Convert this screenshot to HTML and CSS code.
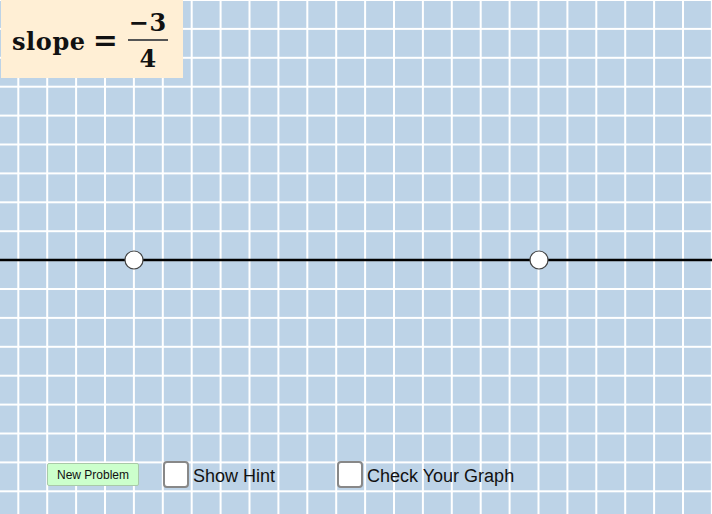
FILE: index.html
```html
<!DOCTYPE html>
<html lang="en">
<head>
    <meta charset="UTF-8">
    <meta name="viewport" content="width=device-width, initial-scale=1.0">
    <title>Graph a Line from its Slope</title>
    <link rel="stylesheet" href="styles.css">
</head>
<body>
    <div class="applet">
        <svg class="board" width="712" height="514" viewBox="0 0 712 514">
            <defs>
                <pattern id="grid" x="17.3" y="-1" width="28.9" height="28.9" patternUnits="userSpaceOnUse">
                    <rect x="0" y="0" width="2" height="28.9" fill="#fff"/>
                    <rect x="0" y="0" width="28.9" height="2" fill="#fff"/>
                </pattern>
            </defs>
            <rect width="712" height="514" fill="#bdd3e7"/>
            <rect width="712" height="514" fill="url(#grid)"/>
            <line x1="0" y1="260" x2="712" y2="260" stroke="#000" stroke-width="2.5"/>
            <circle cx="134" cy="260" r="9" fill="#fff" stroke="#444" stroke-width="1.2"/>
            <circle cx="539" cy="260" r="9" fill="#fff" stroke="#444" stroke-width="1.2"/>
        </svg>

        <div class="slope-box">
            <div class="math">
                <span class="word">slope</span>
                <span class="eq">=</span>
                <span class="frac">
                    <span class="num">&minus;3</span>
                    <span class="bar"></span>
                    <span class="den">4</span>
                </span>
            </div>
        </div>

        <div class="controls">
            <button class="btn-new" type="button">New Problem</button>
            <label class="check">
                <span class="box"></span>
                <span class="label-text">Show Hint</span>
            </label>
            <label class="check check-graph">
                <span class="box"></span>
                <span class="label-text">Check Your Graph</span>
            </label>
        </div>
    </div>
</body>
</html>
```

FILE: styles.css
```css
body {
    margin: 0;
    padding: 0;
    font-family: "Liberation Sans", Arial, sans-serif;
    background-color: #fff;
}
.applet {
    position: relative;
    width: 712px;
    height: 514px;
    overflow: hidden;
}
.board {
    position: absolute;
    left: 0;
    top: 0;
    display: block;
}
.slope-box {
    position: absolute;
    left: 1px;
    top: 0;
    width: 182px;
    height: 78px;
    background-color: #ffefd5;
    box-sizing: border-box;
    padding: 9px 0 0 11px;
}
.math {
    display: flex;
    align-items: flex-start;
    font-family: "DejaVu Serif", "Liberation Serif", serif;
    font-weight: bold;
    font-size: 24px;
    color: #111;
}
.word {
    letter-spacing: 0.6px;
    line-height: 30px;
    margin-top: 18px;
}
.eq {
    font-size: 30px;
    line-height: 30px;
    margin: 16px 10px 0 7px;
}
.frac {
    display: flex;
    flex-direction: column;
    align-items: center;
    width: 40px;
}
.num {
    line-height: 28px;
    letter-spacing: 1px;
}
.bar {
    display: block;
    width: 40px;
    height: 2px;
    margin-top: 2px;
    background-color: #555;
}
.den {
    line-height: 30px;
    margin-top: 3px;
}
.controls {
    position: absolute;
    left: 47px;
    top: 461px;
    display: flex;
    align-items: center;
    height: 27px;
}
.btn-new {
    height: 23px;
    width: 92px;
    padding: 0;
    font-family: "Liberation Sans", Arial, sans-serif;
    font-size: 12px;
    color: #111;
    background-color: #ccffcc;
    border: 1px solid #a9c9a9;
    border-radius: 2px;
    margin-right: 24px;
}
.check {
    display: flex;
    align-items: center;
    gap: 4px;
    font-size: 18px;
    color: #111;
}
.check-graph {
    margin-left: 62px;
}
.box {
    width: 22px;
    height: 23px;
    background-color: #fff;
    border: 2px solid #888;
    border-radius: 4px;
}
.label-text {
    position: relative;
    top: 2px;
}
```
